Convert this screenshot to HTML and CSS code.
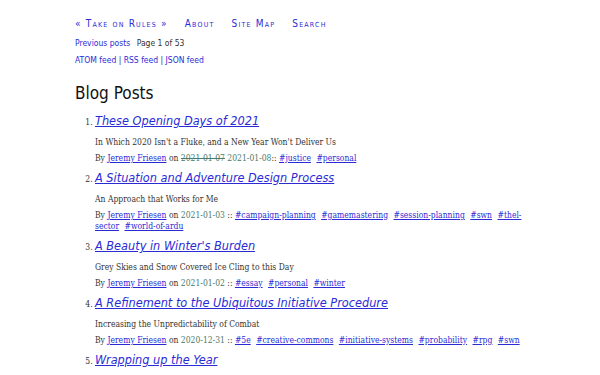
FILE: index.html
```html
<!DOCTYPE html>
<html lang="en">
<head>
    <meta charset="UTF-8">
    <meta name="viewport" content="width=device-width, initial-scale=1.0">
    <title>Blog Posts - Take on Rules</title>
    <link rel="stylesheet" href="styles.css">
</head>
<body>
    <div class="page">
        <!-- Site navigation -->
        <nav class="site-nav">
            <a href="#">&laquo; Take on Rules &raquo;</a>
            <a href="#">About</a>
            <a href="#">Site Map</a>
            <a href="#">Search</a>
        </nav>

        <div class="pager">
            <a href="#">Previous posts</a>
            <span>Page 1 of 53</span>
        </div>

        <div class="feeds">
            <a href="#">ATOM feed</a> | <a href="#">RSS feed</a> | <a href="#">JSON feed</a>
        </div>

        <main>
            <h1>Blog Posts</h1>

            <ol class="posts">
                <li>
                    <h2><a href="#">These Opening Days of 2021</a></h2>
                    <p class="subtitle">In Which 2020 Isn't a Fluke, and a New Year Won't Deliver Us</p>
                    <p class="byline">By <a href="#">Jeremy Friesen</a> on <del>2021-01-07</del> <time>2021-01-08</time>:: <a class="tag" href="#">#justice</a> <a class="tag" href="#">#personal</a></p>
                </li>
                <li>
                    <h2><a href="#">A Situation and Adventure Design Process</a></h2>
                    <p class="subtitle">An Approach that Works for Me</p>
                    <p class="byline">By <a href="#">Jeremy Friesen</a> on <time>2021-01-03</time> :: <a class="tag" href="#">#campaign-planning</a> <a class="tag" href="#">#gamemastering</a> <a class="tag" href="#">#session-planning</a> <a class="tag" href="#">#swn</a> <a class="tag" href="#">#thel-sector</a> <a class="tag" href="#">#world-of-ardu</a></p>
                </li>
                <li>
                    <h2><a href="#">A Beauty in Winter's Burden</a></h2>
                    <p class="subtitle">Grey Skies and Snow Covered Ice Cling to this Day</p>
                    <p class="byline">By <a href="#">Jeremy Friesen</a> on <time>2021-01-02</time> :: <a class="tag" href="#">#essay</a> <a class="tag" href="#">#personal</a> <a class="tag" href="#">#winter</a></p>
                </li>
                <li>
                    <h2><a href="#">A Refinement to the Ubiquitous Initiative Procedure</a></h2>
                    <p class="subtitle">Increasing the Unpredictability of Combat</p>
                    <p class="byline">By <a href="#">Jeremy Friesen</a> on <time>2020-12-31</time> :: <a class="tag" href="#">#5e</a> <a class="tag" href="#">#creative-commons</a> <a class="tag" href="#">#initiative-systems</a> <a class="tag" href="#">#probability</a> <a class="tag" href="#">#rpg</a> <a class="tag" href="#">#swn</a></p>
                </li>
                <li>
                    <h2><a href="#">Wrapping up the Year</a></h2>
                    <p class="subtitle">Looking Back on a Year of Writing, Gaming, and Living</p>
                    <p class="byline">By <a href="#">Jeremy Friesen</a> on <time>2020-12-30</time> :: <a class="tag" href="#">#personal</a></p>
                </li>
            </ol>
        </main>
    </div>
</body>
</html>
```

FILE: styles.css
```css
/* General Reset */
* {
    box-sizing: border-box;
    margin: 0;
    padding: 0;
}

body {
    font-family: "DejaVu Sans Condensed", "DejaVu Sans", sans-serif;
    font-stretch: condensed;
    color: #333;
    background: #fff;
}

a {
    color: #2b2bd6;
}

/* Page column */
.page {
    max-width: 450px;
    margin: 0 auto;
    padding-top: 17px;
}

/* Site navigation */
.site-nav {
    display: flex;
    gap: 17px;
    font-size: 10px;
    font-variant: small-caps;
    letter-spacing: 1.2px;
    line-height: 14px;
}

.site-nav a {
    text-decoration: none;
}

/* Pager and feeds */
.pager,
.feeds {
    font-size: 8.5px;
    line-height: 12px;
}

.pager {
    margin-top: 6px;
}

.pager a {
    text-decoration: none;
    margin-right: 4px;
}

.feeds {
    margin-top: 5px;
}

.feeds a {
    text-decoration: none;
}

/* Main Content */
h1 {
    font-size: 17px;
    font-weight: normal;
    color: #111;
    margin-top: 16px;
    line-height: 22px;
}

.posts {
    margin-top: 8px;
    padding-left: 20px;
    font-family: "DejaVu Serif Condensed", "DejaVu Serif", serif;
    font-size: 8.5px;
}

.posts li {
    margin-bottom: 5px;
}

.posts h2 {
    display: inline;
    font-family: "DejaVu Sans Condensed", "DejaVu Sans", sans-serif;
    font-size: 12.6px;
    font-style: italic;
    font-weight: normal;
    line-height: 18px;
}

.subtitle {
    margin-top: 6px;
    line-height: 12px;
}

.byline {
    margin-top: 5px;
    line-height: 11px;
}

.byline del,
.byline time {
    color: #4a7a6a;
}

.tag {
    margin-right: 3px;
}
```
